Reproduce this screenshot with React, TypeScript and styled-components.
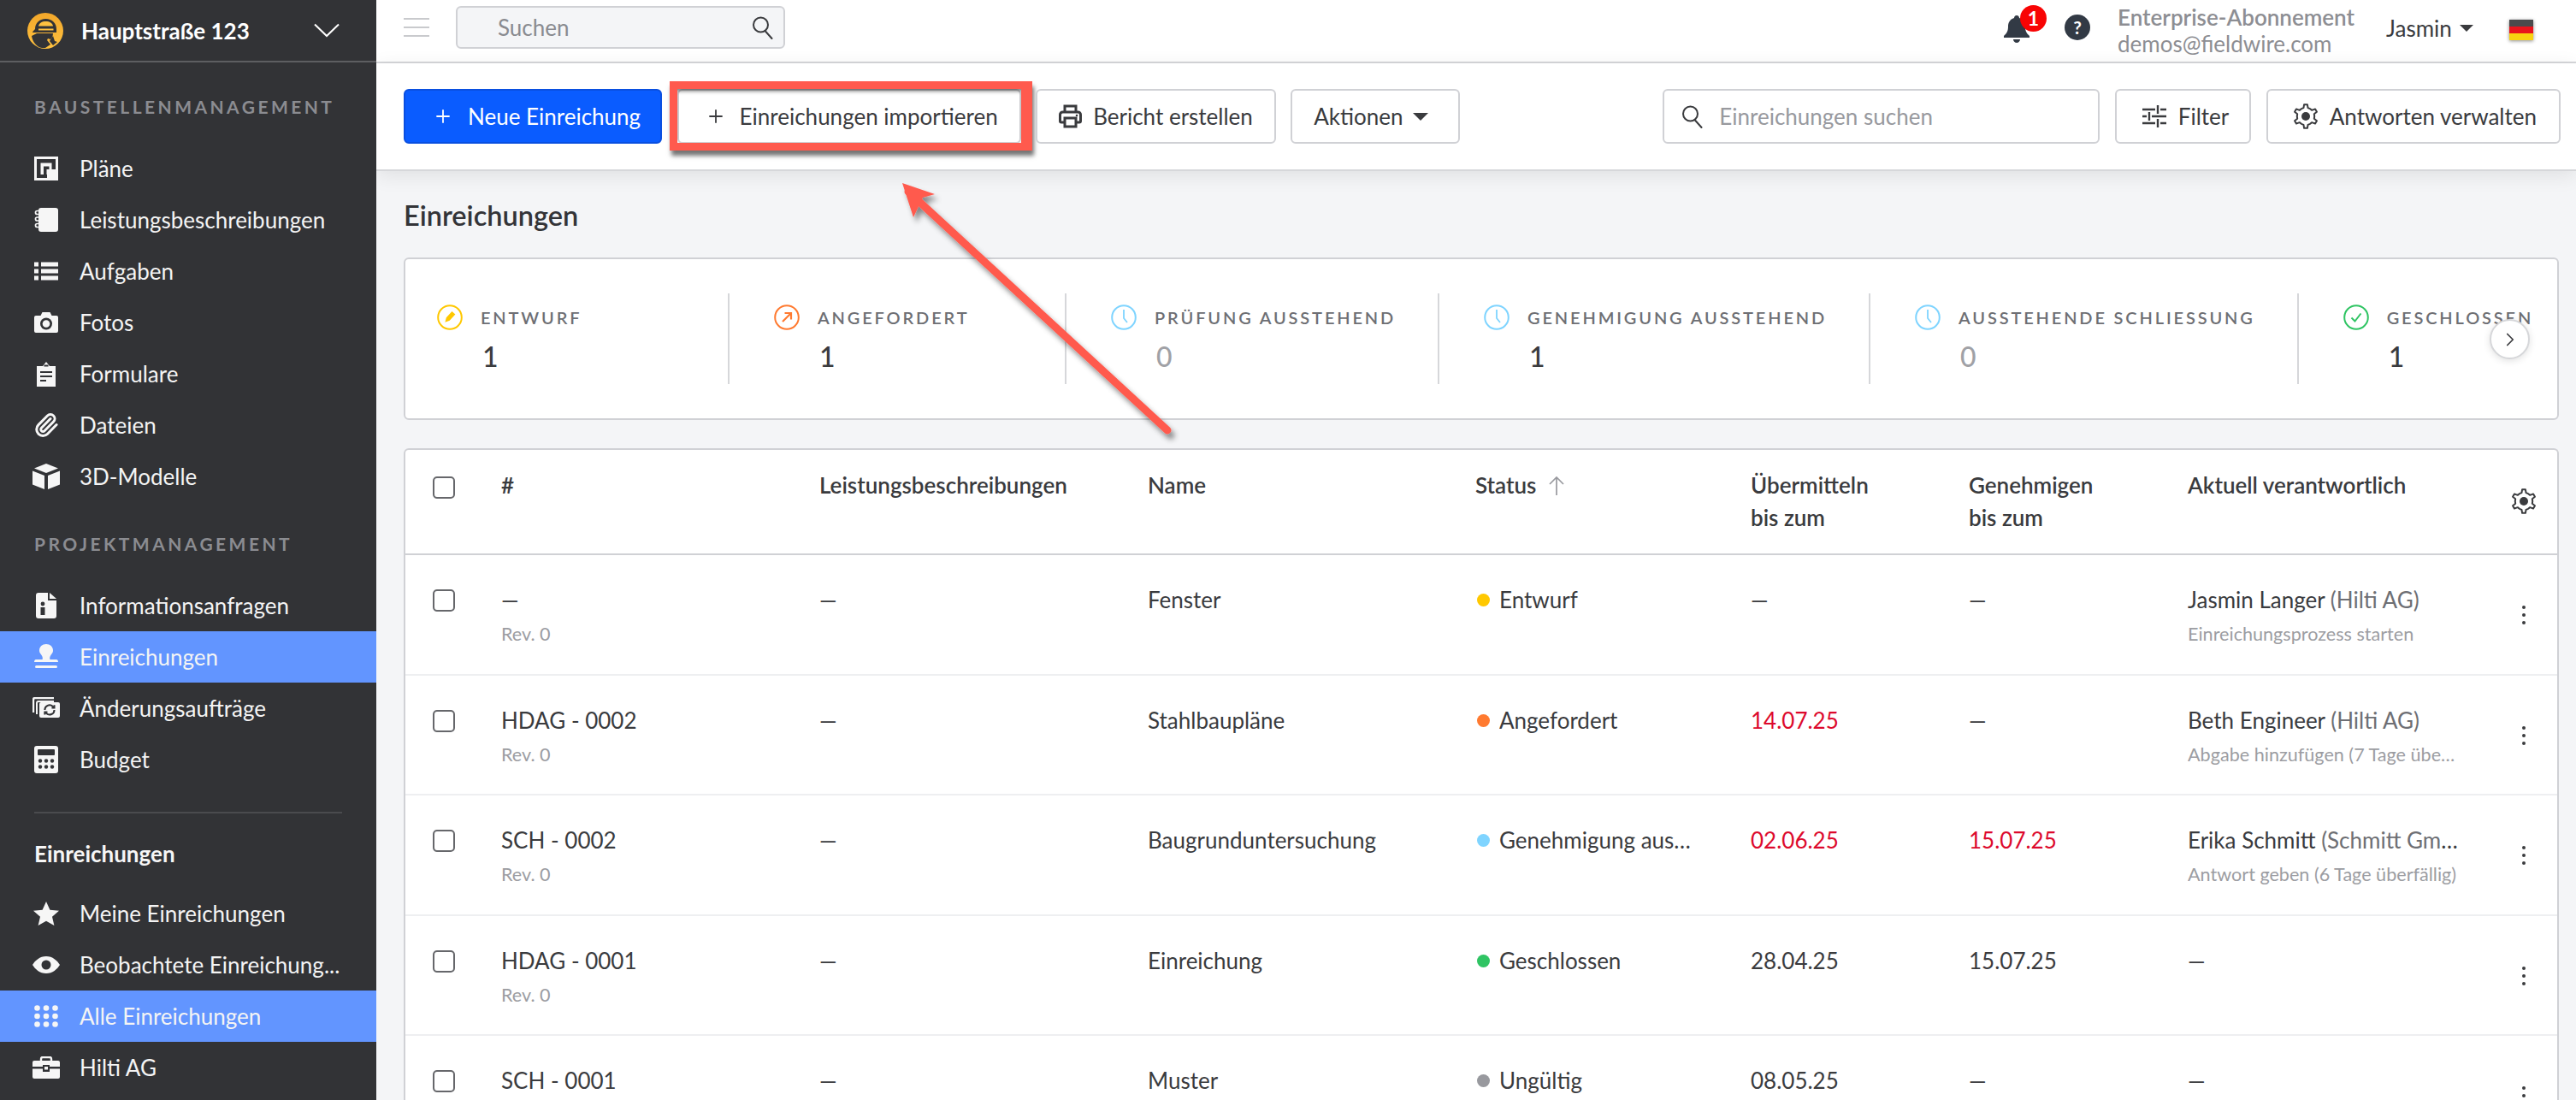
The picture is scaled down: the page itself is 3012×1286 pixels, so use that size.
import React from "react";
import styled, { createGlobalStyle } from "styled-components";
import { Paperclip, Plus, ChevronRight } from "lucide-react";

const Global = createGlobalStyle`
  html, body { margin: 0; padding: 0; background: #f4f5f7; }
  * { box-sizing: border-box; }
  body { font-family: "Lato", "Liberation Sans", sans-serif; color: #3a3b3e; }
`;

const Page = styled.div`
  position: relative;
  width: 3012px;
  height: 1286px;
  overflow: hidden;
  display: grid;
  grid-template-columns: 440px 1fr;
`;

/* ---------- sidebar ---------- */
const Sidebar = styled.aside`
  background: #323336;
  color: #f6f6f6;
  display: flex;
  flex-direction: column;
  height: 1286px;
`;
const ProjectHeader = styled.div`
  height: 73px;
  flex: 0 0 73px;
  border-bottom: 2px solid #5d5e61;
  display: flex;
  align-items: center;
  padding: 0 43px 0 32px;
`;
const ProjectName = styled.div`
  margin-left: 21px;
  font-size: 26px;
  font-weight: 700;
  color: #fff;
  flex: 1;
  white-space: nowrap;
`;
const SectionLabel = styled.div<{ $top: number }>`
  margin: ${(p) => p.$top}px 0 27px 40px;
  height: 30px;
  line-height: 30px;
  font-size: 21px;
  font-weight: 700;
  letter-spacing: 3.45px;
  color: #8b8c91;
  white-space: nowrap;
`;
const NavItem = styled.div<{ $active?: boolean }>`
  height: 60px;
  flex: 0 0 60px;
  display: flex;
  align-items: center;
  padding-left: 38px;
  font-size: 26px;
  color: #f4f4f4;
  background: ${(p) => (p.$active ? "#6295ff" : "transparent")};
  white-space: nowrap;
`;
const NavIconBox = styled.span`
  width: 32px;
  height: 34px;
  margin-right: 23px;
  display: flex;
  align-items: center;
  justify-content: center;
  flex: 0 0 32px;
`;
const NavDivider = styled.div`
  margin: 31px 40px 32px;
  height: 2px;
  background: #4a4b4e;
`;
const SubTitle = styled.div`
  margin: 0 0 25px 40px;
  height: 30px;
  line-height: 30px;
  font-size: 26px;
  font-weight: 700;
  color: #f6f6f6;
`;

/* ---------- main ---------- */
const Main = styled.main`
  display: flex;
  flex-direction: column;
  min-width: 0;
  height: 1286px;
  overflow: hidden;
  background: #f4f5f7;
`;
const TopBar = styled.header`
  flex: 0 0 74px;
  background: #fff;
  border-bottom: 2px solid #d6d7da;
  display: flex;
  align-items: center;
  padding: 0 50px 0 32px;
`;
const Hamburger = styled.div`
  width: 30px;
  height: 22px;
  display: flex;
  flex-direction: column;
  justify-content: space-between;
  margin: 0 31px 8px 0;
  span { display: block; height: 2px; background: #c9cacd; }
`;
const TopSearch = styled.div`
  width: 385px;
  height: 50px;
  background: #f4f5f7;
  border: 2px solid #d0d1d5;
  border-radius: 6px;
  display: flex;
  align-items: center;
  justify-content: space-between;
  padding: 0 10px 0 47px;
  color: #8a8b90;
  font-size: 26px;
  margin-bottom: 8px;
`;
const TopRight = styled.div`
  margin-left: auto;
  display: flex;
  align-items: center;
`;
const BellWrap = styled.div`
  position: relative;
  width: 30px;
  height: 32px;
  margin: 0 41px 4px 0;
`;
const Badge = styled.span`
  position: absolute;
  left: 19px;
  top: -12px;
  width: 31px;
  height: 31px;
  border-radius: 50%;
  background: #f80404;
  color: #fff;
  font-size: 23px;
  font-weight: 700;
  line-height: 31px;
  text-align: center;
`;
const Help = styled.span`
  width: 30px;
  height: 30px;
  border-radius: 50%;
  background: #323a45;
  color: #fff;
  font-size: 21px;
  font-weight: 700;
  line-height: 30px;
  text-align: center;
  margin: 0 32px 8px 0;
`;
const Account = styled.div`
  display: flex;
  flex-direction: column;
  color: #8d8e93;
  width: 314px;
  margin-bottom: 1px;
`;
const Plan = styled.div`
  font-size: 26px;
  line-height: 31px;
  font-weight: 600;
  white-space: nowrap;
`;
const Email = styled.div`
  font-size: 26px;
  line-height: 31px;
  white-space: nowrap;
`;
const UserMenu = styled.div`
  font-size: 26px;
  color: #3a3b3e;
  display: flex;
  align-items: center;
  gap: 9px;
  width: 144px;
  margin-bottom: 6px;
`;
const Caret = styled.span<{ $w?: number }>`
  display: inline-block;
  width: 0;
  height: 0;
  border-left: ${(p) => (p.$w ?? 16) / 2}px solid transparent;
  border-right: ${(p) => (p.$w ?? 16) / 2}px solid transparent;
  border-top: ${(p) => (p.$w ?? 16) / 2}px solid currentColor;
`;
const Flag = styled.div`
  width: 28px;
  height: 24px;
  margin-bottom: 2px;
  display: flex;
  flex-direction: column;
  box-shadow: 0 1px 4px rgba(0, 0, 0, 0.45);
`;
const Stripe = styled.span<{ $c: string }>`
  flex: 1;
  background: ${(p) => p.$c};
`;

const Toolbar = styled.div`
  position: relative;
  z-index: 2;
  flex: 0 0 126px;
  background: #fff;
  border-bottom: 2px solid #d6d7da;
  box-shadow: 0 5px 22px rgba(0, 0, 0, 0.09);
  display: flex;
  align-items: center;
  padding: 0 18px 0 32px;
  gap: 17.5px;
`;
const Button = styled.div<{ $pl: number; $pr: number; $gap: number; $primary?: boolean }>`
  position: relative;
  height: 64px;
  display: flex;
  align-items: center;
  gap: ${(p) => p.$gap}px;
  padding: 0 ${(p) => p.$pr}px 0 ${(p) => p.$pl}px;
  border-radius: 6px;
  border: 2px solid ${(p) => (p.$primary ? "#0a4fe0" : "#d0d1d5")};
  background: ${(p) => (p.$primary ? "#0a5cff" : "#fff")};
  color: ${(p) => (p.$primary ? "#fff" : "#3a3b3e")};
  font-size: 26px;
  white-space: nowrap;
`;
const Highlighted = styled(Button)`
  &::after {
    content: "";
    position: absolute;
    inset: -11px -15px -10px -11px;
    border: solid #ff5a4e;
    border-width: 9px 13px 9px 9px;
    box-shadow: 2px 6px 5px rgba(0, 0, 0, 0.55), inset 0 5px 5px -3px rgba(0, 0, 0, 0.6);
    pointer-events: none;
  }
`;
const Spacer = styled.div`
  margin-left: auto;
`;
const SearchField = styled.div`
  width: 511px;
  height: 64px;
  border-radius: 6px;
  border: 2px solid #d0d1d5;
  background: #fff;
  display: flex;
  align-items: center;
  gap: 17px;
  padding-left: 20px;
  color: #98999e;
  font-size: 26px;
`;

const Content = styled.div`
  flex: 1;
  padding: 0 20px 0 32px;
  min-height: 0;
`;
const PageTitle = styled.h1`
  margin: 0;
  height: 101px;
  padding-top: 33px;
  font-size: 32.5px;
  line-height: 38px;
  font-weight: 600;
  color: #333438;
`;

/* ---------- stats ---------- */
const StatsCard = styled.section`
  position: relative;
  height: 190px;
  background: #fff;
  border: 2px solid #d0d1d5;
  border-radius: 6px;
  padding-right: 30px;
  display: flex;
  align-items: center;
  margin-bottom: 33px;
`;
const StatsStrip = styled.div`
  display: flex;
  overflow: hidden;
  width: 100%;
`;
const StatCell = styled.div<{ $first?: boolean; $min?: number }>`
  flex: 0 0 auto;
  min-width: ${(p) => p.$min ?? 394}px;
  height: 106px;
  padding: 13px 49px 0 ${(p) => (p.$first ? 37 : 52)}px;
  border-right: 2px solid #d6d7da;
  display: flex;
  gap: 21px;
  svg { flex: none; }
  &:last-child { border-right: 0; }
`;
const StatLabel = styled.div`
  font-size: 20px;
  line-height: 30px;
  font-weight: 600;
  letter-spacing: 2.85px;
  color: #6e6f74;
  white-space: nowrap;
`;
const StatValue = styled.div<{ $zero?: boolean }>`
  margin: 9px 0 0 2px;
  font-size: 32px;
  line-height: 44px;
  font-weight: 500;
  color: ${(p) => (p.$zero ? "#a0a1a6" : "#3a3b3e")};
`;
const ScrollButton = styled.div`
  position: absolute;
  right: 32px;
  top: 70px;
  width: 47px;
  height: 47px;
  border-radius: 50%;
  background: #fff;
  border: 2px solid #d6d7da;
  box-shadow: 0 2px 8px rgba(0, 0, 0, 0.12);
  display: flex;
  align-items: center;
  justify-content: center;
  color: #3a3b3e;
`;

/* ---------- table ---------- */
const TableCard = styled.section`
  background: #fff;
  border: 2px solid #d0d1d5;
  border-bottom: 0;
  border-radius: 6px 6px 0 0;
`;
const HeadRow = styled.div`
  height: 123px;
  display: grid;
  grid-template-columns: 80px 372px 384px 383px 322px 255px 256px 392px 1fr;
  padding: 22px 0 0 32px;
  border-bottom: 2px solid #d0d1d5;
  font-size: 26px;
  line-height: 38px;
  color: #3a3b3e;
`;
const BodyRow = styled.div`
  height: 140.5px;
  display: grid;
  grid-template-columns: 80px 372px 384px 383px 322px 255px 256px 392px 1fr;
  padding: 33px 0 0 32px;
  border-bottom: 2px solid #eeeff1;
  font-size: 26px;
  line-height: 38px;
  color: #3a3b3e;
`;
const HeadCell = styled.div`
  white-space: nowrap;
  font-weight: 600;
`;
const StatusHead = styled(HeadCell)`
  display: flex;
  align-items: flex-start;
  gap: 14px;
  svg { margin-top: 9px; }
`;
const Check = styled.span<{ $top: number }>`
  display: block;
  width: 26px;
  height: 26px;
  margin-top: ${(p) => p.$top}px;
  border: 2.5px solid #66676b;
  border-radius: 5px;
  background: #fff;
`;
const Sub = styled.div`
  margin-top: 6px;
  font-size: 21.6px;
  line-height: 30px;
  color: #9c9da2;
  white-space: nowrap;
  overflow: hidden;
  text-overflow: ellipsis;
  width: 318px;
`;
const StatusCell = styled.div`
  display: flex;
  align-items: flex-start;
  gap: 11px;
  white-space: nowrap;
`;
const Dot = styled.span<{ $c: string }>`
  width: 15px;
  height: 15px;
  margin: 12px 0 0 2px;
  border-radius: 50%;
  background: ${(p) => p.$c};
  flex: none;
`;
const DateCell = styled.div<{ $late?: boolean }>`
  color: ${(p) => (p.$late ? "#dd0a2d" : "#3a3b3e")};
`;
const Person = styled.div`
  white-space: nowrap;
  overflow: hidden;
  text-overflow: ellipsis;
  width: 320px;
  span { color: #6e6f74; }
`;
const Ellipsised = styled.div`
  width: 228px;
  overflow: hidden;
  text-overflow: ellipsis;
  white-space: nowrap;
`;
const Kebab = styled.div`
  display: flex;
  flex-direction: column;
  align-items: center;
  width: 29px;
  margin-left: -14px;
  margin-top: 26px;
  gap: 5px;
  i { width: 4px; height: 4px; border-radius: 50%; background: #3a3b3e; display: block; }
`;
const HeadGear = styled.div`
  margin: 23px 0 0 -14px;
  width: 29px;
`;

/* ---------- annotation overlay ---------- */
const Annotation = styled.svg`
  position: absolute;
  left: 0;
  top: 0;
  pointer-events: none;
  z-index: 5;
`;

/* ---------- icons ---------- */
const W = "#f6f6f6";
const D = "#323336";
const Svg: React.FC<{ w: number; h: number; children: React.ReactNode }> = ({ w, h, children }) => (
  <svg width={w} height={h} viewBox={`0 0 ${w} ${h}`}>{children}</svg>
);
const PlanIcon = () => (
  <Svg w={28} h={28}>
    <rect width="28" height="28" fill={W} />
    <path d="M3 3H25V15H20.500V7.500H7.500V21H15V25H3z" fill={D} />
    <path d="M11 11.500H17.500V15H14.500V21H11z" fill={D} />
  </Svg>
);
const NotebookIcon = () => (
  <Svg w={28} h={30}>
    <rect x="5" y="1" width="23" height="28" rx="3" fill={W} />
    <g fill="none" stroke={W} strokeWidth="1.700">
      <path d="M7 4.500H3.500a2 2 0 0 0 0 4H7" />
      <path d="M7 12H3.500a2 2 0 0 0 0 4H7" />
      <path d="M7 19.500H3.500a2 2 0 0 0 0 4H7" />
    </g>
  </Svg>
);
const ListIcon = () => (
  <Svg w={28} h={22}>
    <rect x="0" y="0.500" width="5" height="5" fill={W} />
    <rect x="0" y="8.500" width="5" height="5" fill={W} />
    <rect x="0" y="16.500" width="5" height="5" fill={W} />
    <rect x="8" y="0.500" width="20" height="5" fill={W} />
    <rect x="8" y="8.500" width="20" height="5" fill={W} />
    <rect x="8" y="16.500" width="20" height="5" fill={W} />
  </Svg>
);
const CameraIcon = () => (
  <Svg w={28} h={24}>
    <path d="M2 4h5.500L9.500 0h9l2 4H26a2 2 0 0 1 2 2v16a2 2 0 0 1-2 2H2a2 2 0 0 1-2-2V6a2 2 0 0 1 2-2z" fill={W} />
    <circle cx="14" cy="13.500" r="7" fill={D} />
    <circle cx="14" cy="13.500" r="4.300" fill={W} />
  </Svg>
);
const ClipboardIcon = () => (
  <Svg w={22} h={29}>
    <path d="M0 5h7L11 0l4 5h7v24H0z" fill={W} />
    <rect x="8.500" y="3.500" width="5" height="2" fill={D} />
    <rect x="4" y="11" width="14" height="2" fill={D} />
    <rect x="4" y="16" width="14" height="2" fill={D} />
    <rect x="4" y="21" width="7" height="2" fill={D} />
  </Svg>
);
const DocInfoIcon = () => (
  <Svg w={24} h={30}>
    <path d="M3 0h11v9h10v18a3 3 0 0 1-3 3H3a3 3 0 0 1-3-3V3a3 3 0 0 1 3-3z" fill={W} />
    <path d="M16 0l8 7h-8z" fill={W} />
    <circle cx="8" cy="13" r="2.400" fill={D} />
    <rect x="5.500" y="17" width="5" height="9" fill={D} />
  </Svg>
);
const StampIcon = () => (
  <Svg w={28} h={30}>
    <path d="M14 0c4.600 0 8 3.200 8 7.400 0 3.200-2.400 4.800-3.400 7-.6 1.200-.4 2.600-.2 3.600H26c1 0 2 1 2 3H0c0-2 1-3 2-3h7.600c.2-1 .4-2.400-.2-3.600-1-2.200-3.400-3.800-3.400-7C6 3.200 9.400 0 14 0z" fill={W} />
    <rect x="1" y="25" width="26" height="3" rx="1.500" fill={W} />
  </Svg>
);
const OrdersIcon = () => (
  <Svg w={32} h={26}>
    <path d="M1 18V3a2 2 0 0 1 2-2h22" fill="none" stroke={W} strokeWidth="2.400" />
    <path d="M5 20V7a2 2 0 0 1 2-2h18" fill="none" stroke={W} strokeWidth="2" />
    <rect x="8" y="6" width="24" height="18" rx="2" fill={W} />
    <g transform="translate(12.500 7.500) scale(.62)" fill="none" stroke={D} strokeWidth="3.200">
      <path d="M3 12a9 9 0 0 1 15-6.700L21 8M21 12a9 9 0 0 1-15 6.700L3 16" />
      <path d="M21 3v5h-5M3 21v-5h5" />
    </g>
  </Svg>
);
const CalcIcon = () => (
  <Svg w={28} h={32}>
    <rect x="0" y="0" width="28" height="32" rx="3" fill={W} />
    <rect x="4" y="4" width="20" height="7" rx="1" fill={D} />
    {[7, 14, 21].map((x) => [17.5, 24.5].map((y) => <circle key={`${x}-${y}`} cx={x} cy={y} r="2.200" fill={D} />))}
  </Svg>
);
const CubeIcon = () => (
  <Svg w={32} h={30}>
    <path d="M16 0l14 5.500-14 5.500-14-5.500z" fill={W} />
    <path d="M0 8.500l14 5.500v16L0 24.500zM32 8.500L18 14v16l14-5.500z" fill={W} />
  </Svg>
);
const StarIcon = () => (
  <Svg w={30} h={28}>
    <path d="M15 0l4.400 9.800 10.600 1-8 7 2.400 10.200L15 22.800 5.600 28 8 17.800l-8-7 10.600-1z" fill={W} />
  </Svg>
);
const EyeIcon = () => (
  <Svg w={32} h={20}>
    <path fillRule="evenodd" d="M16 0c7.500 0 13 5 16 10-3 5-8.500 10-16 10S3 15 0 10C3 5 8.500 0 16 0zm0 4.500a5.500 5.500 0 1 0 0 11 5.500 5.500 0 0 0 0-11z" fill={W} />
  </Svg>
);
const DotsIcon = () => (
  <Svg w={28} h={26}>
    {[3.5, 14, 24.5].map((x) => [3.5, 13, 22.5].map((y) => <circle key={`${x}-${y}`} cx={x} cy={y} r="3.300" fill={W} />))}
  </Svg>
);
const CaseIcon = () => (
  <Svg w={32} h={26}>
    <path d="M10 5V3a2 2 0 0 1 2-2h8a2 2 0 0 1 2 2v2" fill="none" stroke={W} strokeWidth="2.400" />
    <path d="M2 5h28a2 2 0 0 1 2 2v5H20v-2h-8v2H0V7a2 2 0 0 1 2-2z" fill={W} />
    <path d="M0 14.500h12V18h8v-3.500h12V24a2 2 0 0 1-2 2H2a2 2 0 0 1-2-2z" fill={W} />
    <rect x="14" y="12" width="4" height="3.500" fill={W} />
  </Svg>
);
const Logo = () => (
  <svg width="42" height="42" viewBox="0 0 42 42">
    <defs>
      <linearGradient id="lg" x1="0" y1="0" x2="0" y2="1">
        <stop offset="0" stopColor="#f2a72a" />
        <stop offset="1" stopColor="#ffc240" />
      </linearGradient>
    </defs>
    <circle cx="21" cy="21" r="21" fill="url(#lg)" />
    <path d="M6 23c0-1 2-3 3-4 0-7 5-12 12.500-12S34 12 34 19v4z" fill="#323336" />
    <path d="M13 15.500C13.500 12 17 10 21.500 10s8 2 8.500 5.500z" fill="#ffc240" />
    <rect x="13" y="18.500" width="17.500" height="2" fill="#ffc240" />
    <path d="M11 24h19c0 3-1.500 6-3 7l-3-1-1 2 4 5-6 4h-4C11 40 6 34 5 27z" fill="#323336" />
    <path d="M30 27l2 6 3 1-5 4-4-5z" fill="#323336" />
  </svg>
);
const HeaderChevron = () => (
  <svg width="30" height="17" viewBox="0 0 30 17" fill="none" stroke="#fff" strokeWidth="2">
    <path d="M1 1.500L15 15 29 1.500" />
  </svg>
);
const SearchGlyph: React.FC<{ c: string; s?: number }> = ({ c, s = 27 }) => (
  <svg width={s} height={s} viewBox="0 0 27 27" fill="none" stroke={c} strokeWidth="2">
    <circle cx="10.500" cy="10" r="8.500" />
    <path d="M15.500 17l8 9" strokeLinecap="round" />
  </svg>
);
const PrinterGlyph = () => (
  <svg width="27" height="28" viewBox="0 0 27 28" fill="none" stroke="#3a3b3e" strokeWidth="3">
    <path d="M7 9V2h13v7" />
    <path d="M6 21H3a1.500 1.500 0 0 1-1.500-1.500V12a3 3 0 0 1 3-3h18a3 3 0 0 1 3 3v7.500A1.500 1.500 0 0 1 24 21h-3" />
    <path d="M7 16h13v10H7z" />
    <circle cx="21" cy="13" r="1.300" fill="#3a3b3e" stroke="none" />
  </svg>
);
const Sliders = () => (
  <svg width="28" height="28" viewBox="0 0 28 28" fill="none" stroke="#3a3b3e" strokeWidth="2.400">
    <path d="M0 6h15M21 6h7M18 1v10M0 14h5M11 14h17M8 9v10M0 22h15M21 22h7M18 17v10" />
  </svg>
);
const gearPath = (() => {
  const teeth = 6;
  const R = 14;
  const r = 10.2;
  const pts: string[] = [];
  for (let i = 0; i < teeth; i++) {
    const a = (i * 2 * Math.PI) / teeth - Math.PI / 2;
    const step = (2 * Math.PI) / teeth;
    [
      [r, -step * 0.5],
      [r, -step * 0.24],
      [R, -step * 0.13],
      [R, step * 0.13],
      [r, step * 0.24],
    ].forEach(([rad, off]) => {
      pts.push(`${(15 + rad * Math.cos(a + off)).toFixed(2)} ${(15 + rad * Math.sin(a + off)).toFixed(2)}`);
    });
  }
  return `M${pts.join("L")}z`;
})();
const Gear: React.FC<{ s: number }> = ({ s }) => (
  <svg width={s} height={s} viewBox="0 0 30 30">
    <path d={gearPath} fill="none" stroke="#3a3b3e" strokeWidth="2" strokeLinejoin="round" />
    <circle cx="15" cy="15" r="5" fill="#3a3b3e" />
  </svg>
);
const Bell = () => (
  <svg width="30" height="32" viewBox="0 0 30 32" fill="#323a45">
    <path d="M15 0c2 0 3 1.500 3 3 5 1.500 7 5.500 7 10 0 5 1.500 8 5 11v2H0v-2c3.500-3 5-6 5-11 0-4.500 2-8.500 7-10 0-1.500 1-3 3-3z" />
    <path d="M11 28h8c0 2.200-1.800 4-4 4s-4-1.800-4-4z" />
  </svg>
);
const SortUp = () => (
  <svg width="20" height="22" viewBox="0 0 20 22" fill="none" stroke="#98999e" strokeWidth="1.700">
    <path d="M10 1v21M2 9l8-8 8 8" />
  </svg>
);
const StatIcon: React.FC<{ c: string; kind: "pen" | "up" | "clock" | "check" }> = ({ c, kind }) => (
  <svg width="30" height="30" viewBox="0 0 30 30" fill="none" stroke={c} strokeWidth="2">
    <circle cx="15" cy="15" r="13.800" />
    {kind === "pen" && (
      <path d="M10.500 19.500l1-4 6-6.500 2.800 2.500-6 6.500zM16.500 10.500l2.800 2.500" fill={c} strokeWidth="1.500" />
    )}
    {kind === "up" && <path d="M10 20L20 10M12.500 10H20v7.500" strokeWidth="2.200" />}
    {kind === "clock" && <path d="M15 6v10l4 5" strokeWidth="1.800" />}
    {kind === "check" && <path d="M9.500 15.500l4 4 7-9" strokeWidth="2" />}
  </svg>
);

type NavDef = { icon: React.ReactNode; label: string; active?: boolean };
const groupA: NavDef[] = [
  { icon: <PlanIcon />, label: "Pläne" },
  { icon: <NotebookIcon />, label: "Leistungsbeschreibungen" },
  { icon: <ListIcon />, label: "Aufgaben" },
  { icon: <CameraIcon />, label: "Fotos" },
  { icon: <ClipboardIcon />, label: "Formulare" },
  { icon: <Paperclip size={30} color={W} strokeWidth={2.4} />, label: "Dateien" },
  { icon: <CubeIcon />, label: "3D-Modelle" },
];
const groupB: NavDef[] = [
  { icon: <DocInfoIcon />, label: "Informationsanfragen" },
  { icon: <StampIcon />, label: "Einreichungen", active: true },
  { icon: <OrdersIcon />, label: "Änderungsaufträge" },
  { icon: <CalcIcon />, label: "Budget" },
];
const groupC: NavDef[] = [
  { icon: <StarIcon />, label: "Meine Einreichungen" },
  { icon: <EyeIcon />, label: "Beobachtete Einreichung..." },
  { icon: <DotsIcon />, label: "Alle Einreichungen", active: true },
  { icon: <CaseIcon />, label: "Hilti AG" },
];
const renderNav = (items: NavDef[]) =>
  items.map((n) => (
    <NavItem key={n.label} $active={n.active}>
      <NavIconBox>{n.icon}</NavIconBox>
      {n.label}
    </NavItem>
  ));

const stats = [
  { c: "#ffc800", k: "pen", l: "ENTWURF", v: "1", first: true, min: 379 },
  { c: "#ff7a30", k: "up", l: "ANGEFORDERT", v: "1" },
  { c: "#7fd4ff", k: "clock", l: "PRÜFUNG AUSSTEHEND", v: "0" },
  { c: "#7fd4ff", k: "clock", l: "GENEHMIGUNG AUSSTEHEND", v: "1" },
  { c: "#7fd4ff", k: "clock", l: "AUSSTEHENDE SCHLIESSUNG", v: "0" },
  { c: "#2fc463", k: "check", l: "GESCHLOSSEN", v: "1" },
] as const;

type RowDef = {
  id: string;
  name: string;
  status: string;
  dot: string;
  sub: string;
  subLate?: boolean;
  apprv: string;
  apprvLate?: boolean;
  person?: string;
  org?: string;
  note?: string;
};
const rows: RowDef[] = [
  { id: "—", name: "Fenster", status: "Entwurf", dot: "#ffc800", sub: "—", apprv: "—", person: "Jasmin Langer", org: "(Hilti AG)", note: "Einreichungsprozess starten" },
  { id: "HDAG - 0002", name: "Stahlbaupläne", status: "Angefordert", dot: "#ff7a30", sub: "14.07.25", subLate: true, apprv: "—", person: "Beth Engineer", org: "(Hilti AG)", note: "Abgabe hinzufügen (7 Tage überfällig)" },
  { id: "SCH - 0002", name: "Baugrunduntersuchung", status: "Genehmigung ausstehend", dot: "#7fd4ff", sub: "02.06.25", subLate: true, apprv: "15.07.25", apprvLate: true, person: "Erika Schmitt", org: "(Schmitt GmbH)", note: "Antwort geben (6 Tage überfällig)" },
  { id: "HDAG - 0001", name: "Einreichung", status: "Geschlossen", dot: "#2fc463", sub: "28.04.25", apprv: "15.07.25" },
  { id: "SCH - 0001", name: "Muster", status: "Ungültig", dot: "#98999e", sub: "08.05.25", apprv: "—" },
];

export default function App() {
  return (
    <Page>
      <Global />
      <Sidebar>
        <ProjectHeader>
          <Logo />
          <ProjectName>Hauptstraße 123</ProjectName>
          <HeaderChevron />
        </ProjectHeader>
        <SectionLabel $top={37}>BAUSTELLENMANAGEMENT</SectionLabel>
        {renderNav(groupA)}
        <SectionLabel $top={34}>PROJEKTMANAGEMENT</SectionLabel>
        {renderNav(groupB)}
        <NavDivider />
        <SubTitle>Einreichungen</SubTitle>
        {renderNav(groupC)}
      </Sidebar>
      <Main>
        <TopBar>
          <Hamburger><span /><span /><span /></Hamburger>
          <TopSearch>
            Suchen
            <SearchGlyph c="#3a3b3e" />
          </TopSearch>
          <TopRight>
            <BellWrap>
              <Bell />
              <Badge>1</Badge>
            </BellWrap>
            <Help>?</Help>
            <Account>
              <Plan>Enterprise-Abonnement</Plan>
              <Email>demos@fieldwire.com</Email>
            </Account>
            <UserMenu>
              Jasmin <Caret $w={16} />
            </UserMenu>
            <Flag>
              <Stripe $c="#4a4a4c" />
              <Stripe $c="#e8141c" />
              <Stripe $c="#f8d210" />
            </Flag>
          </TopRight>
        </TopBar>
        <Toolbar>
          <Button $primary $pl={32} $pr={23} $gap={17}>
            <Plus size={24} strokeWidth={1.8} />
            Neue Einreichung
          </Button>
          <Highlighted $pl={31} $pr={25} $gap={16}>
            <Plus size={24} strokeWidth={1.8} />
            Einreichungen importieren
          </Highlighted>
          <Button $pl={25} $pr={25} $gap={13}>
            <PrinterGlyph />
            Bericht erstellen
          </Button>
          <Button $pl={25} $pr={35} $gap={11}>
            Aktionen <Caret $w={19} />
          </Button>
          <Spacer />
          <SearchField>
            <SearchGlyph c="#3a3b3e" />
            Einreichungen suchen
          </SearchField>
          <Button $pl={30} $pr={24} $gap={14}>
            <Sliders />
            Filter
          </Button>
          <Button $pl={29} $pr={26} $gap={13}>
            <Gear s={30} />
            Antworten verwalten
          </Button>
        </Toolbar>
        <Content>
          <PageTitle>Einreichungen</PageTitle>
          <StatsCard>
            <StatsStrip>
              {stats.map((s) => (
                <StatCell key={s.l} $first={"first" in s} $min={"min" in s ? s.min : undefined}>
                  <StatIcon c={s.c} kind={s.k} />
                  <div>
                    <StatLabel>{s.l}</StatLabel>
                    <StatValue $zero={s.v === "0"}>{s.v}</StatValue>
                  </div>
                </StatCell>
              ))}
            </StatsStrip>
            <ScrollButton>
              <ChevronRight size={26} strokeWidth={1.6} />
            </ScrollButton>
          </StatsCard>
          <TableCard>
            <HeadRow>
              <Check $top={9} />
              <HeadCell>#</HeadCell>
              <HeadCell>Leistungsbeschreibungen</HeadCell>
              <HeadCell>Name</HeadCell>
              <StatusHead>
                Status <SortUp />
              </StatusHead>
              <HeadCell>Übermitteln<br />bis zum</HeadCell>
              <HeadCell>Genehmigen<br />bis zum</HeadCell>
              <HeadCell>Aktuell verantwortlich</HeadCell>
              <HeadGear><Gear s={30} /></HeadGear>
            </HeadRow>
            {rows.map((r) => (
              <BodyRow key={r.name}>
                <Check $top={7} />
                <div>
                  {r.id}
                  <Sub>Rev. 0</Sub>
                </div>
                <div>—</div>
                <div>{r.name}</div>
                <StatusCell>
                  <Dot $c={r.dot} />
                  <Ellipsised>{r.status}</Ellipsised>
                </StatusCell>
                <DateCell $late={r.subLate}>{r.sub}</DateCell>
                <DateCell $late={r.apprvLate}>{r.apprv}</DateCell>
                <div>
                  {r.person ? (
                    <Person>
                      {r.person} <span>{r.org}</span>
                    </Person>
                  ) : (
                    "—"
                  )}
                  {r.note && <Sub>{r.note}</Sub>}
                </div>
                <Kebab><i /><i /><i /></Kebab>
              </BodyRow>
            ))}
          </TableCard>
        </Content>
      </Main>
      <Annotation width="3012" height="1286" viewBox="0 0 3012 1286">
        <defs>
          <filter id="as" x="-20%" y="-20%" width="140%" height="140%">
            <feDropShadow dx="4" dy="6" stdDeviation="3" floodColor="#000" floodOpacity="0.45" />
          </filter>
        </defs>
        <g filter="url(#as)" fill="#ff5a4e">
          <path d="M1062 224L1365 503" stroke="#ff5a4e" strokeWidth="9" strokeLinecap="round" />
          <path d="M1055 214l38 13-14 4-11 23z" />
        </g>
      </Annotation>
    </Page>
  );
}
